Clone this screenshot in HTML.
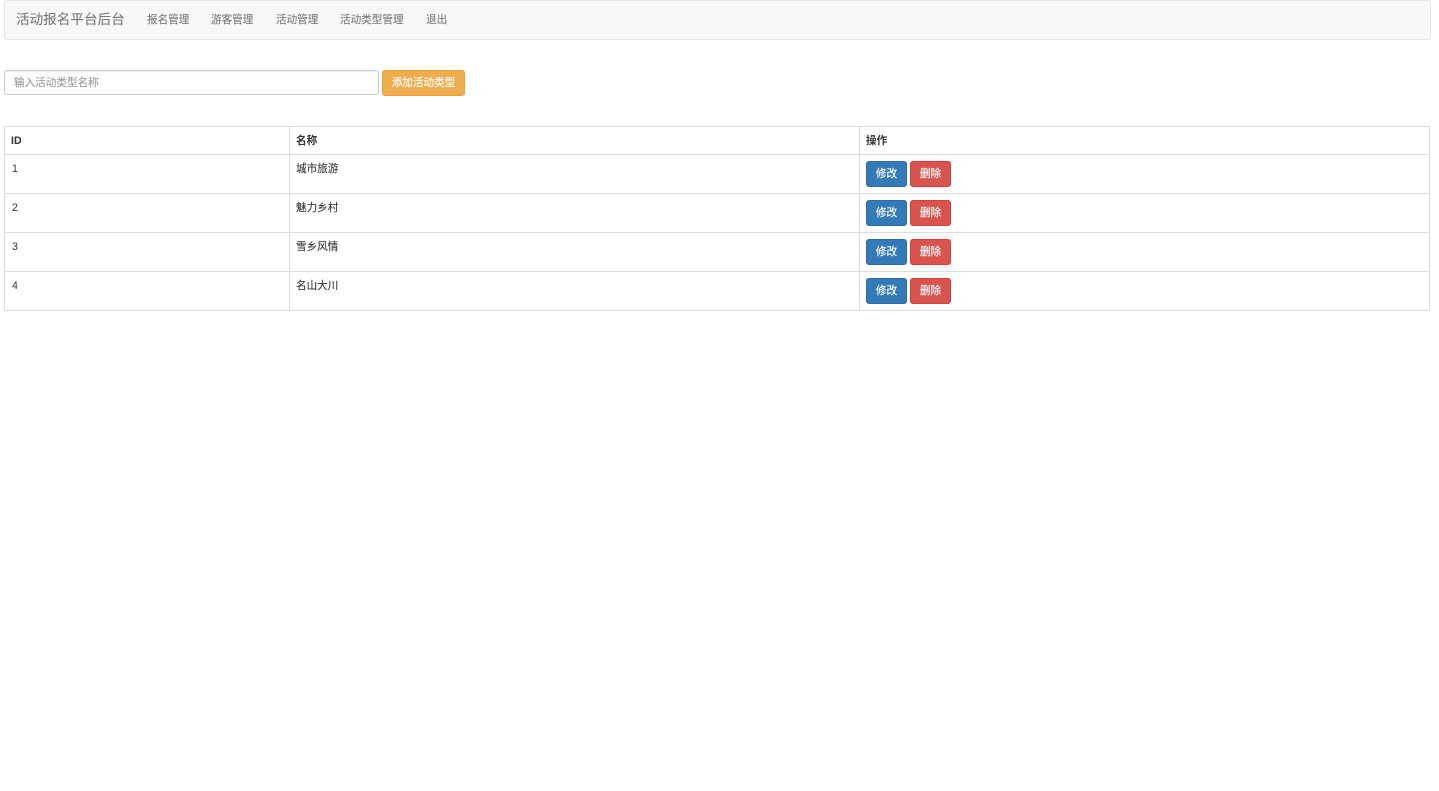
<!DOCTYPE html>
<html lang="zh-CN">
<head>
<meta charset="utf-8">
<title>活动类型管理</title>
<style>
*{box-sizing:border-box}
html,body{margin:0;padding:0;background:#fff;width:1439px;height:791px;overflow:hidden}
body{position:relative;font-family:"Liberation Sans","Noto Sans CJK SC",sans-serif;font-size:10.5px;color:#333}
.a{position:absolute;white-space:nowrap}
.nav{left:4px;top:0;width:1427px;height:40px;background:#f8f8f8;border:1px solid #e7e7e7;border-radius:3px}
.n{top:13px;line-height:15px;color:#777;font-size:10.6px;-webkit-text-stroke:.1px #777}
.brand{left:16px;top:12px;line-height:16px;font-size:13.6px;color:#777;-webkit-text-stroke:.1px #777}
.inp{left:4px;top:70px;width:375px;height:25px;border:1px solid #ccc;border-radius:3px;background:#fff;box-shadow:inset 0 1px 1px rgba(0,0,0,.075);padding-left:9px;line-height:25px;color:#999;font-size:10.6px;-webkit-text-stroke:.1px #999}
.btn{border-radius:3px;color:#fff;text-align:center;font-size:10.6px;border:1px solid;height:26px;line-height:24px;-webkit-text-stroke:.15px #fff}
.add{left:382px;top:70px;width:83px;background:#f0ad4e;border-color:#eea236}
.tb{left:4px;top:126px;width:1426px;height:185px;border:1px solid #ddd}
.h{background:#ddd;height:1px;left:4px;width:1426px}
.v{background:#ddd;width:1px;top:126px;height:185px}
.t{line-height:15px;font-size:10.6px;color:#333;-webkit-text-stroke:.1px #333}
.i{left:12px;-webkit-text-stroke:0}
.b{font-weight:bold;-webkit-text-stroke:0}
.m{left:866px;width:41px;background:#337ab7;border-color:#2e6da4}
.d{left:910px;width:41px;background:#d9534f;border-color:#d43f3a}
</style>
</head>
<body>
<div class="a nav"></div>
<div class="a brand">活动报名平台后台</div>
<div class="a n" style="left:147px">报名管理</div>
<div class="a n" style="left:211px">游客管理</div>
<div class="a n" style="left:276px">活动管理</div>
<div class="a n" style="left:340px">活动类型管理</div>
<div class="a n" style="left:426px">退出</div>

<div class="a inp">输入活动类型名称</div>
<div class="a btn add">添加活动类型</div>

<div class="a tb"></div>
<div class="a h" style="top:154px"></div>
<div class="a h" style="top:193px"></div>
<div class="a h" style="top:232px"></div>
<div class="a h" style="top:271px"></div>
<div class="a v" style="left:289px"></div>
<div class="a v" style="left:859px"></div>

<div class="a t b" style="left:11px;top:134px">ID</div>
<div class="a t b" style="left:296px;top:134px">名称</div>
<div class="a t b" style="left:866px;top:134px">操作</div>

<div class="a t i" style="top:162px">1</div>
<div class="a t" style="left:296px;top:162px">城市旅游</div>
<div class="a btn m" style="top:161px">修改</div>
<div class="a btn d" style="top:161px">删除</div>

<div class="a t i" style="top:201px">2</div>
<div class="a t" style="left:296px;top:201px">魅力乡村</div>
<div class="a btn m" style="top:200px">修改</div>
<div class="a btn d" style="top:200px">删除</div>

<div class="a t i" style="top:240px">3</div>
<div class="a t" style="left:296px;top:240px">雪乡风情</div>
<div class="a btn m" style="top:239px">修改</div>
<div class="a btn d" style="top:239px">删除</div>

<div class="a t i" style="top:279px">4</div>
<div class="a t" style="left:296px;top:279px">名山大川</div>
<div class="a btn m" style="top:278px">修改</div>
<div class="a btn d" style="top:278px">删除</div>
</body>
</html>
